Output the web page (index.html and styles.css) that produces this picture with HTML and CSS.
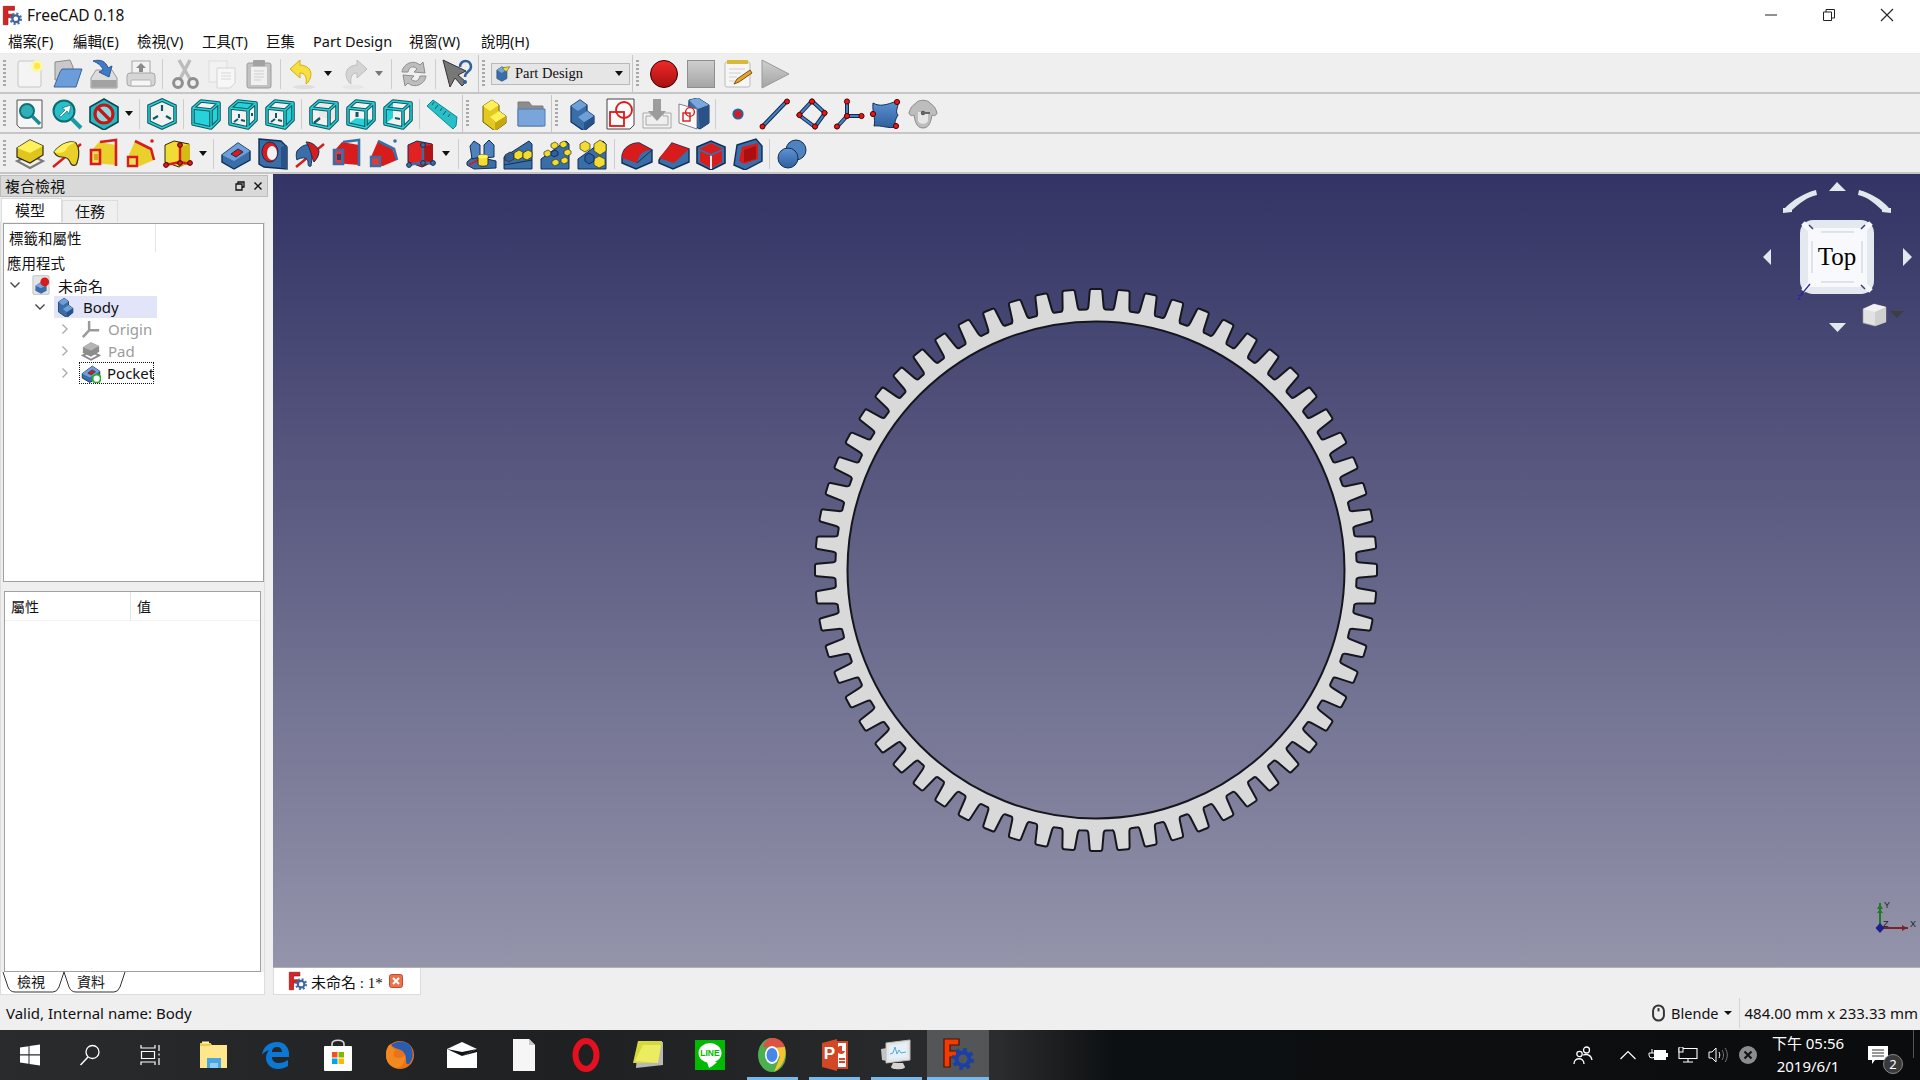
FILE: index.html
```html
<!DOCTYPE html>
<html lang="zh-Hant">
<head>
    <meta charset="UTF-8">
    <title>FreeCAD 0.18</title>
    <link rel="stylesheet" href="styles.css">
</head>
<body>
    <!-- icon sheet -->
    <svg class="defs" xmlns="http://www.w3.org/2000/svg">
        <defs>
            <linearGradient id="gRed" x1="0" y1="0" x2="0" y2="1"><stop offset="0" stop-color="#f02a2a"/><stop offset="1" stop-color="#a80f0f"/></linearGradient>
            <linearGradient id="gGrey" x1="0" y1="0" x2="0" y2="1"><stop offset="0" stop-color="#cfcfcf"/><stop offset="1" stop-color="#a4a4a4"/></linearGradient>
            <linearGradient id="gBlue" x1="0" y1="0" x2="0" y2="1"><stop offset="0" stop-color="#5f93d3"/><stop offset="1" stop-color="#2f5f9f"/></linearGradient>
            <g id="cframe" fill="none" stroke-linejoin="round">
                <path d="M3 10L11 3 29 5V22L21 30 3 26zM3 10L21 12 29 5M21 12V30" stroke="#0d5a62" stroke-width="3.6"/>
                <path d="M3 10L11 3 29 5V22L21 30 3 26zM3 10L21 12 29 5M21 12V30" stroke="#2bd0d8" stroke-width="1.4"/>
            </g>
        </defs>
        <symbol id="logo" viewBox="0 0 32 32"><path d="M2 2h17v6H9v6h8v5H9v11H2z" fill="#d62424" stroke="#7e1414"/><circle cx="21" cy="21" r="7.6" fill="none" stroke="#4a6fa8" stroke-width="4" stroke-dasharray="3 2.95"/><circle cx="21" cy="21" r="5.2" fill="none" stroke="#3f66a3" stroke-width="3.4"/></symbol>

        <symbol id="new" viewBox="0 0 32 32"><rect x="4" y="3" width="23" height="26" rx="2" fill="#f4f4f4" stroke="#c6c6c6"/><circle cx="23" cy="8" r="6" fill="#fdf7a8"/><circle cx="23" cy="8" r="3.2" fill="#fbe94a"/></symbol>
        <symbol id="open" viewBox="0 0 32 32"><path d="M4 22V4l15-2 3 7v13z" fill="#c9c9c9" stroke="#8b8b8b"/><path d="M9 14l2-3h20l-6 18H3z" fill="#6c9ddb" stroke="#3a659e"/></symbol>
        <symbol id="save" viewBox="0 0 32 32"><path d="M3 20l5-8h16l5 8v10H3z" fill="#dcdcdc" stroke="#9a9a9a"/><rect x="3.5" y="22" width="25" height="7.5" fill="#a2a2a2"/><path d="M5 3c7-2 13 0 15 7l4-2-3 11-10-5 4-2c-1-4-5-7-10-9z" fill="#3f7bc8" stroke="#2b568f"/></symbol>
        <symbol id="export" viewBox="0 0 32 32"><rect x="7" y="3" width="18" height="13" fill="#f2f2f2" stroke="#a8a8a8"/><path d="M16 5l5 5h-3v4h-4v-4h-3z" fill="#8a8a8a"/><rect x="2" y="15" width="28" height="13" rx="3" fill="#d6d6d6" stroke="#a6a6a6"/><rect x="6" y="22" width="20" height="6" rx="1" fill="#f6f6f6" stroke="#b4b4b4"/></symbol>
        <symbol id="cut" viewBox="0 0 32 32"><path d="M11 21L21 2M21 21L10 2" stroke="#bcbcbc" stroke-width="3.4" fill="none"/><circle cx="9" cy="25" r="4.4" fill="none" stroke="#8e8e8e" stroke-width="3"/><circle cx="24" cy="25" r="4.4" fill="none" stroke="#8e8e8e" stroke-width="3"/></symbol>
        <symbol id="copy" viewBox="0 0 32 32"><rect x="3" y="3" width="18" height="21" fill="#f2f2f2" stroke="#dedede"/><path d="M11 10h18v15l-5 5H11z" fill="#f7f7f7" stroke="#d4d4d4"/><path d="M15 15h10M15 18h10M15 21h10" stroke="#d8d8d8"/></symbol>
        <symbol id="paste" viewBox="0 0 32 32"><rect x="4" y="5" width="24" height="25" rx="2" fill="#c2c2c2" stroke="#9c9c9c"/><rect x="8" y="9" width="16" height="18" fill="#f0f0f0"/><rect x="10" y="2" width="12" height="6" rx="1" fill="#a2a2a2"/><path d="M11 13h10M11 16h10M11 19h10M11 22h7" stroke="#d0d0d0"/></symbol>
        <symbol id="undo" viewBox="0 0 32 32"><ellipse cx="17" cy="29" rx="11" ry="2" fill="#dedede"/><path d="M13 2L3 11l10 9v-5c5 0 7 4 6 11 6-4 9-18-6-19z" fill="#f6df3e" stroke="#d3ad14"/></symbol>
        <symbol id="redo" viewBox="0 0 32 32"><ellipse cx="15" cy="29" rx="11" ry="2" fill="#e6e6e6"/><path d="M19 2l10 9-10 9v-5c-5 0-7 4-6 11-6-4-9-18 6-19z" fill="#d4d4d4" stroke="#bebebe"/></symbol>
        <symbol id="refresh" viewBox="0 0 32 32"><path d="M4 14C5 6 15 1 22 7l3-3 2 11-11-1 3-3c-4-4-8-2-9 3z" fill="#bdbdbd" stroke="#8c8c8c"/><path d="M28 18c-1 8-11 13-18 7l-3 3-2-11 11 1-3 3c4 4 8 2 9-3z" fill="#bdbdbd" stroke="#8c8c8c"/></symbol>
        <symbol id="whats" viewBox="0 0 32 32"><path d="M1 2l7 27 5-9 7 8 4-4-8-7 8-4z" fill="#777" stroke="#333"/><path d="M18 9c0-8 11-8 11 0 0 5-6 4-6 10" fill="none" stroke="#2e6299" stroke-width="2.600"/><circle cx="23" cy="24" r="2" fill="#2e6299"/></symbol>
        <symbol id="mini-part" viewBox="0 0 32 32"><path d="M5 9l9-6 9 5v16l-9 5-9-5z" fill="#3a6ea8" stroke="#1e3e68"/><path d="M14 14l9-6-9-5-9 6z" fill="#75a3dc"/><path d="M15 5l13-2-6 9-3-2z" fill="#f3dc3c" stroke="#5c4d05"/></symbol>

        <symbol id="fit" viewBox="0 0 32 32"><path d="M3 2h25v28H6l-3-3z" fill="#f6f6f6" stroke="#555"/><circle cx="13" cy="13" r="7" fill="#2fb0b8" stroke="#117078" stroke-width="2"/><path d="M18 18l8 8" stroke="#1a8a92" stroke-width="3.4"/></symbol>
        <symbol id="fitsel" viewBox="0 0 32 32"><circle cx="13" cy="13" r="10.5" fill="#27bfc8" stroke="#0e6a72" stroke-width="2"/><path d="M21 21l9 9" stroke="#1a9aa2" stroke-width="4"/><path d="M8 18l6-6-3-2 9-3-2 9-2-3-6 6z" fill="#fff" stroke="#0e6a72" stroke-width=".7"/></symbol>
        <symbol id="draw" viewBox="0 0 32 32"><path d="M16 1l14 8v15l-14 8-14-8V9z" fill="#27b9c2" stroke="#0e4a50" stroke-width="1.6"/><circle cx="16" cy="16" r="9" fill="#8fd6da" stroke="#c01818" stroke-width="3.2"/><path d="M10 10l12 12" stroke="#c01818" stroke-width="3.2"/></symbol>
        <symbol id="iso" viewBox="0 0 32 32"><g fill="none"><path d="M16 2l13 6v16l-13 6-13-6V8z" fill="#f2f2f2" stroke="#0d5a62" stroke-width="3.600"/><path d="M16 2l13 6v16l-13 6-13-6V8z" stroke="#2bd0d8" stroke-width="1.400"/></g><path d="M16 7v6M7 21l5-3M25 21l-5-3" stroke="#0e5a62" stroke-width="2.200"/></symbol>
        <symbol id="cfront" viewBox="0 0 32 32"><path d="M3 10L11 3 29 5V22L21 30 3 26z" fill="#f2f2f2"/><path d="M3 10L21 12V30L3 26zM21 12L29 5V22L21 30z" fill="#27d3db"/><use href="#cframe"/></symbol>
        <symbol id="ctop" viewBox="0 0 32 32"><path d="M3 10L11 3 29 5V22L21 30 3 26z" fill="#f2f2f2"/><path d="M3 10L11 3 29 5 21 12z" fill="#27d3db"/><use href="#cframe"/><path d="M12 16v4M7 24l4-3M14 22l4 1M25 15v3" stroke="#0e5a62" stroke-width="2"/></symbol>
        <symbol id="cright" viewBox="0 0 32 32"><path d="M3 10L11 3 29 5V22L21 30 3 26z" fill="#f2f2f2"/><path d="M21 12L29 5V22L21 30z" fill="#27d3db"/><use href="#cframe"/><path d="M12 15v5M7 24l4-3M14 22l4 1" stroke="#0e5a62" stroke-width="2"/></symbol>
        <symbol id="crear" viewBox="0 0 32 32"><path d="M3 10L11 3 29 5V22L21 30 3 26z" fill="#f2f2f2"/><path d="M11 5L27 7V21L11 19z" fill="#e8e8e8"/><use href="#cframe"/><path d="M6 25l6-5" stroke="#0e5a62" stroke-width="2.400"/></symbol>
        <symbol id="cbottom" viewBox="0 0 32 32"><path d="M3 10L11 3 29 5V22L21 30 3 26z" fill="#f2f2f2"/><path d="M3 26L21 30 29 22 11 20z" fill="#27d3db"/><use href="#cframe"/><path d="M12 14v5" stroke="#0e5a62" stroke-width="3"/></symbol>
        <symbol id="cleft" viewBox="0 0 32 32"><path d="M3 10L11 3 29 5V22L21 30 3 26z" fill="#f2f2f2"/><path d="M3 10L11 3V20L3 26z" fill="#27d3db"/><use href="#cframe"/><path d="M13 20l5 1" stroke="#0e5a62" stroke-width="2"/></symbol>
        <symbol id="ruler" viewBox="0 0 32 32"><path d="M1 8l6-6 24 17-1 9-3 3z" fill="#27bfc8" stroke="#0e8890"/><path d="M8 4l-2 3M12 7l-3 4M16 10l-2 3M20 13l-3 4M24 16l-2 3" stroke="#0e6068" fill="none"/></symbol>

        <symbol id="step-y" viewBox="0 0 32 32"><path d="M5 13V8l9-6 7 5v6l7 5v7l-11 8L5 24z" fill="#e3c91f" stroke="#6a5a06"/><path d="M5 8l9-6 7 5-9 6zM12 19l9-6 7 5-10 6z" fill="#fff05c"/><path d="M17 25l11-7v7l-11 8z" fill="#c4a90e"/></symbol>
        <symbol id="folder" viewBox="0 0 32 32"><path d="M3 4h11l3 4h11v20H3z" fill="#8d8d8d" stroke="#7a7a7a"/><path d="M3 11h27v17H3z" fill="#7aa5da" stroke="#4e7cb4"/></symbol>
        <symbol id="step-b" viewBox="0 0 32 32"><path d="M4 13V8l9-6 7 5v6l7 5v7l-10 8L4 24z" fill="#3a6ea8" stroke="#102f56" stroke-width="1.2"/><path d="M4 8l9-6 7 5-9 6zM11 19l9-6 7 5-10 6z" fill="#6f9fd8"/><path d="M17 25l10-7v7l-10 8z" fill="#2a5288"/></symbol>
        <symbol id="sketch" viewBox="0 0 32 32"><path d="M3 1h27v26l-4 4H3z" fill="#fafafa" stroke="#444"/><rect x="6" y="14" width="14" height="14" fill="none" stroke="#e01818" stroke-width="1.8"/><circle cx="20" cy="12" r="8" fill="none" stroke="#e01818" stroke-width="1.8"/></symbol>
        <symbol id="inport" viewBox="0 0 32 32"><path d="M2 15h8v3H5v9h22v-9h-5v-3h8v15H2z" fill="#f2f2f2" stroke="#a8a8a8"/><path d="M12 1h8v12h5l-9 10-9-10h5z" fill="#9c9c9c"/></symbol>
        <symbol id="shape" viewBox="0 0 32 32"><path d="M11 2l9-2 11 7v18l-9 6-12-6z" fill="#3a6ea8" stroke="#102f56"/><path d="M11 2l9-2 11 7-11 4z" fill="#7aa7dd"/><path d="M20 11l11-4v18l-9 6z" fill="#2a5288"/><path d="M1 6l18 5v20L1 25z" fill="#fafafa" stroke="#555" stroke-width=".7"/><rect x="5" y="15" width="7" height="8" fill="none" stroke="#e01818" stroke-width="1.4"/><circle cx="12" cy="14" r="4.4" fill="none" stroke="#e01818" stroke-width="1.4"/></symbol>
        <symbol id="point" viewBox="0 0 32 32"><circle cx="16" cy="16" r="4.6" fill="#d81c1c" stroke="#2f5f9f" stroke-width="2"/></symbol>
        <symbol id="line" viewBox="0 0 32 32"><path d="M3 29L28 3" stroke="#0e2a4e" stroke-width="4"/><path d="M3 29L28 3" stroke="#4a80c2" stroke-width="2"/><circle cx="3.5" cy="28.5" r="2.5" fill="#e01818" stroke="#500"/><circle cx="28" cy="3.5" r="2.5" fill="#e01818" stroke="#500"/></symbol>
        <symbol id="plane" viewBox="0 0 32 32"><path d="M16 3l13 12-10 14L3 17z" fill="none" stroke="#0e2a4e" stroke-width="4"/><path d="M16 3l13 12-10 14L3 17z" fill="none" stroke="#4a80c2" stroke-width="2"/><circle cx="16" cy="3.5" r="2.6" fill="#e01818" stroke="#500"/><circle cx="28.5" cy="15" r="2.6" fill="#e01818" stroke="#500"/><circle cx="19" cy="28.5" r="2.6" fill="#e01818" stroke="#500"/><circle cx="3.5" cy="17" r="2.6" fill="#e01818" stroke="#500"/></symbol>
        <symbol id="lcs" viewBox="0 0 32 32"><path d="M14 3v15L4 29M14 18h15" fill="none" stroke="#0e2a4e" stroke-width="4"/><path d="M14 3v15L4 29M14 18h15" fill="none" stroke="#4a80c2" stroke-width="2"/><circle cx="14" cy="3.5" r="2.6" fill="#e01818" stroke="#500"/><circle cx="14" cy="18" r="2.6" fill="#e01818" stroke="#500"/><circle cx="28.5" cy="18" r="2.6" fill="#e01818" stroke="#500"/><circle cx="4" cy="28.5" r="2.6" fill="#e01818" stroke="#500"/></symbol>
        <symbol id="binder" viewBox="0 0 32 32"><path d="M3 5c7 4 13 2 24-2 3 5-3 10 1 14-3 5-4 9-2 12-8 2-14-2-22-1 2-8-2-13-1-23z" fill="url(#gBlue)" stroke="#102f56"/><circle cx="27" cy="4" r="2.6" fill="#e01818" stroke="#500"/><circle cx="26" cy="28" r="2.6" fill="#e01818" stroke="#500"/><circle cx="3" cy="16" r="2.6" fill="#e01818" stroke="#500"/></symbol>
        <symbol id="sheep" viewBox="0 0 32 32"><path d="M8 6c3-5 13-5 16 0 3 2 4 3 6 9-1 3-3 3-5 2-1 5-2 13-9 13s-8-8-9-13c-2 1-4 1-5-2 2-6 3-7 6-9z" fill="#bdbdbd" stroke="#8a8a8a"/><path d="M11 14h10v8c0 5-10 5-10 0z" fill="#e6e6e6"/><circle cx="16" cy="15" r="2.2" fill="#555"/><rect x="15" y="14" width="8" height="2" fill="#666"/></symbol>

        <symbol id="pad" viewBox="0 0 32 32"><path d="M16 17l13 6-13 7-13-7z" fill="none" stroke="#7a7a7a" stroke-width="2"/><path d="M3 10l13-8 13 6v9l-13 8-13-6z" fill="#e0c51c" stroke="#2e2a08" stroke-width="1.2"/><path d="M3 10l13-8 13 6-13 7z" fill="#fff15a"/></symbol>
        <symbol id="rev" viewBox="0 0 32 32"><path d="M2 29L30 6" stroke="#d81c1c" stroke-width="2.4"/><path d="M3 14C10 5 20 2 25 5c3 4 4 12 1 20-1 3-4 3-6 1-2-5-4-7-9-7-3 0-6-1-8-5z" fill="#e8cf2a" stroke="#3a3308" stroke-width="1.2"/><path d="M3 14C10 5 20 2 25 5c-3 0-8 2-10 7-3 3-7 4-12 2z" fill="#fff15a"/></symbol>
        <symbol id="aloft" viewBox="0 0 32 32"><path d="M11 4l17 3v20l-24-2V12z" fill="#ead02c"/><path d="M3 12h9v14H3z" fill="#f1dc5e" stroke="#d81c1c" stroke-width="2.6"/><path d="M12 4l16-2v26" fill="none" stroke="#d81c1c" stroke-width="2.6"/><rect x="6" y="16" width="4" height="6" fill="#d6a820"/></symbol>
        <symbol id="apipe" viewBox="0 0 32 32"><path d="M10 3L24 10l5 12-14 6H3v-9z" fill="#ead02c"/><path d="M10 3l16 8 3 11" fill="none" stroke="#d81c1c" stroke-width="2.6"/><path d="M3 19h9v9H3z" fill="#f1dc5e" stroke="#d81c1c" stroke-width="2.4"/><circle cx="27" cy="3" r="1.8" fill="#d81c1c"/></symbol>
        <symbol id="aprim" viewBox="0 0 32 32"><path d="M3 7l9-4 15 3v18l-10 5-14-5z" fill="#f0dc32" stroke="#2e2a08"/><path d="M18 9v20l10-5V6z" fill="#d6ba16"/><path d="M18 7v17M4 27l14-3 10 2" fill="none" stroke="#d81c1c" stroke-width="2.4"/><circle cx="18" cy="7" r="2.4" fill="#d81c1c" stroke="#500"/><circle cx="18" cy="25" r="2.4" fill="#d81c1c" stroke="#500"/><circle cx="4" cy="27" r="2.4" fill="#d81c1c" stroke="#500"/><circle cx="28" cy="25" r="2.4" fill="#d81c1c" stroke="#500"/></symbol>
        <symbol id="pocket" viewBox="0 0 32 32"><path d="M2 17L18 5l12 8v9L14 31 2 24z" fill="#3a6ea8" stroke="#102f56" stroke-width="1.4"/><path d="M2 17L18 5l12 8-16 10z" fill="#6f9fd8"/><path d="M11 16l7-5 5 3-7 5z" fill="#d81c1c" stroke="#102f56"/></symbol>
        <symbol id="hole" viewBox="0 0 32 32"><path d="M2 1l22 2 6 6v22l-23-2-5-3z" fill="#3a6ea8" stroke="#102f56" stroke-width="1.4"/><path d="M24 9l6-2v24l-6-2z" fill="#2a5288"/><ellipse cx="13" cy="14" rx="8" ry="10" fill="#d81c1c" stroke="#102f56"/><ellipse cx="15" cy="15" rx="5" ry="7" fill="#eef2f6"/></symbol>
        <symbol id="groove" viewBox="0 0 32 32"><path d="M2 29L30 6" stroke="#d81c1c" stroke-width="2.4"/><path d="M3 13C8 7 13 6 17 7c2 7 1 14 0 21-3 1-3-1-3-5-1-4-7-4-11-1-1-3-1-6 0-9z" fill="#3a6ea8" stroke="#102f56"/><path d="M12 4c6 0 11 4 13 9 0 4-2 8-5 11-3-6-3-13-8-20z" fill="#d81c1c" stroke="#102f56"/></symbol>
        <symbol id="sloft" viewBox="0 0 32 32"><path d="M11 4l17 3v20l-24-2V12z" fill="#d81c1c"/><path d="M3 12h9v14H3z" fill="#e23a3a" stroke="#3a6ea8" stroke-width="2.6"/><path d="M12 4l16-2v26" fill="none" stroke="#3a6ea8" stroke-width="2.6"/><rect x="6" y="16" width="4" height="6" fill="#333f68"/></symbol>
        <symbol id="spipe" viewBox="0 0 32 32"><path d="M10 3L24 10l5 12-14 6H3v-9z" fill="#d81c1c"/><path d="M10 3l16 8 3 11" fill="none" stroke="#3a6ea8" stroke-width="2.6"/><path d="M3 19h9v9H3z" fill="#e23a3a" stroke="#3a6ea8" stroke-width="2.4"/><circle cx="27" cy="3" r="1.8" fill="#3a6ea8"/></symbol>
        <symbol id="sprim" viewBox="0 0 32 32"><path d="M3 7l9-4 15 3v18l-10 5-14-5z" fill="#e22222" stroke="#102f56"/><path d="M18 9v20l10-5V6z" fill="#b01414"/><path d="M18 7v17M4 27l14-3 10 2" fill="none" stroke="#3a6ea8" stroke-width="2.4"/><circle cx="18" cy="7" r="2.4" fill="#3a6ea8" stroke="#102f56"/><circle cx="18" cy="25" r="2.4" fill="#3a6ea8" stroke="#102f56"/><circle cx="4" cy="27" r="2.4" fill="#3a6ea8" stroke="#102f56"/><circle cx="28" cy="25" r="2.4" fill="#3a6ea8" stroke="#102f56"/></symbol>
        <symbol id="mirror" viewBox="0 0 32 32"><path d="M1 24l7-6 22 5v7l-22 1-7-4z" fill="#3a6ea8" stroke="#102f56"/><path d="M4 8l4-5 6 4v12l-8 2zM18 7l5-5 5 5v12l-10 1z" fill="#4f82bf" stroke="#102f56"/><path d="M3 27L15 20" stroke="#d81c1c" stroke-width="2"/><path d="M12 19c0-3 10-3 10 0v7c0 3-10 3-10 0z" fill="#f0dc32" stroke="#3a3308"/><ellipse cx="17" cy="18.5" rx="5" ry="2" fill="#fff15a"/></symbol>
        <symbol id="linear" viewBox="0 0 32 32"><path d="M1 19L26 3l3 3v25H1z" fill="#3a6ea8" stroke="#102f56"/><path d="M1 27L29 22" stroke="#102f56" stroke-width="1"/><g stroke="#3a3308" stroke-width=".8"><path d="M2 17l5-3 4 2v5l-5 3-4-2z" fill="#2f5f9f"/><path d="M11 15l5-3 4 2v5l-5 3-4-2z" fill="#f0dc32"/><path d="M20 15l5-3 4 2v5l-5 3-4-2z" fill="#f0dc32"/></g></symbol>
        <symbol id="polar" viewBox="0 0 32 32"><path d="M1 21L26 3l3 3v25H1z" fill="#3a6ea8" stroke="#102f56"/><g stroke="#3a3308" stroke-width=".7" fill="#f0dc32"><path d="M4 14l4-2 3 2v3l-4 2-3-2zM11 6l4-2 3 2v3l-4 2-3-2zM20 5l4-2 3 2v3l-4 2-3-2zM24 13l4-2 3 2v3l-4 2-3-2zM21 21l4-2 3 2v3l-4 2-3-2zM12 23l4-2 3 2v3l-4 2-3-2z"/></g><path d="M11 14l4-2 3 2v3l-4 2-3-2z" fill="#2f5f9f" stroke="#102f56"/></symbol>
        <symbol id="multi" viewBox="0 0 32 32"><path d="M1 21L26 3l3 3v25H1z" fill="#3a6ea8" stroke="#102f56"/><g stroke="#3a3308" stroke-width=".7" fill="#f0dc32"><path d="M3 6l5-3 5 3v5l-5 3-5-3zM17 6l6-4 6 4v7l-6 4-6-4zM17 21l5-3 6 3v6l-6 3-5-3z"/></g><path d="M8 18l4-3 5 3v5l-5 3-4-3z" fill="#2f5f9f" stroke="#102f56"/></symbol>
        <symbol id="fillet" viewBox="0 0 32 32"><path d="M1 20c0-10 9-15 17-15l13 7v12L15 31 1 25z" fill="#3a6ea8" stroke="#102f56" stroke-width="1.4"/><path d="M1 20c0-10 9-15 17-15l13 7c-9 0-13 4-15 13z" fill="#d81c1c"/><path d="M16 25l15-13" stroke="#102f56"/></symbol>
        <symbol id="chamfer" viewBox="0 0 32 32"><path d="M1 22l13-17 17 6v13L15 31 1 25z" fill="#3a6ea8" stroke="#102f56" stroke-width="1.4"/><path d="M1 20L14 5l17 6-15 14z" fill="#d81c1c"/></symbol>
        <symbol id="draft" viewBox="0 0 32 32"><path d="M2 9l14-6 14 6v16l-14 7-14-7z" fill="#3a6ea8" stroke="#102f56" stroke-width="1.6"/><path d="M4 11l12-6 12 6-12 5z" fill="#d81c1c"/><path d="M5 12l11 5v13L5 24zM27 12l-11 5v13l11-6z" fill="#d81c1c"/><path d="M16 16v15" stroke="#dfe6ee" stroke-width="2"/><path d="M5 12l11 5 11-5" fill="none" stroke="#3a6ea8" stroke-width="1.600"/></symbol>
        <symbol id="thick" viewBox="0 0 32 32"><path d="M5 7L24 1l6 7v15L13 32 2 27z" fill="#3a6ea8" stroke="#102f56" stroke-width="1.4"/><path d="M10 9l16-4v16l-14 5-5-3z" fill="#d81c1c"/><path d="M12 12l12-4v13l-12 3z" fill="#a80f0f"/></symbol>
        <symbol id="bool" viewBox="0 0 32 32"><circle cx="20" cy="12" r="10" fill="#4f82bf" stroke="#102f56"/><circle cx="12" cy="20" r="10" fill="url(#gBlue)" stroke="#102f56"/></symbol>

        <symbol id="origin" viewBox="0 0 32 32"><path d="M13 3v15L3 29M13 18h16" fill="none" stroke="#9a9a9a" stroke-width="4"/></symbol>
        <symbol id="padg" viewBox="0 0 32 32"><path d="M16 17l13 6-13 7-13-7z" fill="none" stroke="#8a8a8a" stroke-width="3"/><path d="M3 10l13-8 13 6v9l-13 8-13-6z" fill="#8c8c8c"/><path d="M3 10l13-8 13 6-13 7z" fill="#b4b4b4"/></symbol>
        <symbol id="doc" viewBox="0 0 32 32"><rect x="3" y="1" width="26" height="30" rx="2" fill="#e4e4e4" stroke="#aaa"/><path d="M7 17l9-6 9 5v9l-9 5-9-5z" fill="#3a6ea8"/><path d="M7 17l9-6 9 5-9 5z" fill="#7aa7dd"/><circle cx="22" cy="11" r="7" fill="#d81c1c"/></symbol>
    </svg>

    <header class="titlebar">
        <svg class="logo"><use href="#logo"/></svg>
        <span class="title">FreeCAD 0.18</span>
        <div class="winctl">
            <span class="wbtn"><svg width="12" height="12" viewBox="0 0 12 12"><path d="M0 6h12" stroke="#222"/></svg></span>
            <span class="wbtn"><svg width="12" height="12" viewBox="0 0 12 12"><path d="M.5 3h8v8.500h-8zM3 3V.5h8.500V9H9" fill="none" stroke="#222"/></svg></span>
            <span class="wbtn"><svg width="14" height="14" viewBox="0 0 14 14"><path d="M1 1l12 12M13 1L1 13" stroke="#222" stroke-width="1.100"/></svg></span>
        </div>
    </header>

    <nav class="menubar">
        <span class="m1">檔案(F)</span>
        <span class="m2">編輯(E)</span>
        <span class="m3">檢視(V)</span>
        <span class="m4">工具(T)</span>
        <span class="m5">巨集</span>
        <span class="m6">Part Design</span>
        <span class="m7">視窗(W)</span>
        <span class="m8">說明(H)</span>
    </nav>

    <div class="toolbar">
        <i class="grip"></i>
        <span class="btn"><svg><use href="#new"/></svg></span>
        <span class="btn"><svg><use href="#open"/></svg></span>
        <span class="btn"><svg><use href="#save"/></svg></span>
        <span class="btn"><svg><use href="#export"/></svg></span>
        <i class="sep"></i>
        <span class="btn"><svg><use href="#cut"/></svg></span>
        <span class="btn"><svg><use href="#copy"/></svg></span>
        <span class="btn"><svg><use href="#paste"/></svg></span>
        <i class="sep"></i>
        <span class="btn"><svg><use href="#undo"/></svg></span>
        <span class="dd"></span>
        <span class="btn"><svg><use href="#redo"/></svg></span>
        <span class="dd off"></span>
        <i class="sep sep-wide"></i>
        <span class="btn"><svg><use href="#refresh"/></svg></span>
        <i class="sep"></i>
        <span class="btn"><svg><use href="#whats"/></svg></span>
        <i class="end end2"></i>
        <i class="grip"></i>
        <div class="combo">
            <svg class="combo-icon"><use href="#mini-part"/></svg>
            <span>Part Design</span>
            <span class="combo-caret"></span>
        </div>
        <i class="end end2"></i>
        <i class="grip"></i>
        <span class="btn">
            <svg viewBox="0 0 32 32"><circle cx="16" cy="16" r="13.500" fill="url(#gRed)" stroke="#300" stroke-width="1"/></svg>
        </span>
        <span class="btn">
            <svg viewBox="0 0 32 32"><rect x="2.500" y="2.500" width="27" height="27" fill="url(#gGrey)" stroke="#8e8e8e"/></svg>
        </span>
        <span class="btn">
            <svg viewBox="0 0 32 32"><rect x="3" y="4" width="25" height="25" rx="2" fill="#f6f6f6" stroke="#bbb"/><rect x="5" y="2" width="21" height="4" fill="#d8b93a"/><path d="M7 11h16M7 15h12M7 19h8M7 23h6" stroke="#cfcfcf"/><path d="M12 26l3-5 13-9 2 3-13 9z" fill="#e8a32c" stroke="#7a5310"/></svg>
        </span>
        <span class="btn">
            <svg viewBox="0 0 32 32"><path d="M3 2l27 14L3 30z" fill="url(#gGrey)" stroke="#999"/></svg>
        </span>
    </div>

    <div class="toolbar">
        <i class="grip"></i>
        <span class="btn"><svg><use href="#fit"/></svg></span>
        <span class="btn"><svg><use href="#fitsel"/></svg></span>
        <span class="btn"><svg><use href="#draw"/></svg></span>
        <span class="dd"></span>
        <i class="sep"></i>
        <span class="btn"><svg><use href="#iso"/></svg></span>
        <i class="sep"></i>
        <span class="btn"><svg><use href="#cfront"/></svg></span>
        <span class="btn"><svg><use href="#ctop"/></svg></span>
        <span class="btn"><svg><use href="#cright"/></svg></span>
        <i class="sep"></i>
        <span class="btn"><svg><use href="#crear"/></svg></span>
        <span class="btn"><svg><use href="#cbottom"/></svg></span>
        <span class="btn"><svg><use href="#cleft"/></svg></span>
        <i class="sep"></i>
        <span class="btn"><svg><use href="#ruler"/></svg></span>
        <i class="end end2"></i>
        <i class="grip"></i>
        <span class="btn"><svg><use href="#step-y"/></svg></span>
        <span class="btn"><svg><use href="#folder"/></svg></span>
        <i class="end end2"></i>
        <i class="grip"></i>
        <span class="btn"><svg><use href="#step-b"/></svg></span>
        <span class="btn"><svg><use href="#sketch"/></svg></span>
        <span class="btn"><svg><use href="#inport"/></svg></span>
        <span class="btn"><svg><use href="#shape"/></svg></span>
        <i class="sep"></i>
        <span class="btn"><svg><use href="#point"/></svg></span>
        <span class="btn"><svg><use href="#line"/></svg></span>
        <span class="btn"><svg><use href="#plane"/></svg></span>
        <span class="btn"><svg><use href="#lcs"/></svg></span>
        <span class="btn"><svg><use href="#binder"/></svg></span>
        <span class="btn"><svg><use href="#sheep"/></svg></span>
    </div>

    <div class="toolbar">
        <i class="grip"></i>
        <span class="btn"><svg><use href="#pad"/></svg></span>
        <span class="btn"><svg><use href="#rev"/></svg></span>
        <span class="btn"><svg><use href="#aloft"/></svg></span>
        <span class="btn"><svg><use href="#apipe"/></svg></span>
        <span class="btn"><svg><use href="#aprim"/></svg></span>
        <span class="dd"></span>
        <i class="sep"></i>
        <span class="btn"><svg><use href="#pocket"/></svg></span>
        <span class="btn"><svg><use href="#hole"/></svg></span>
        <span class="btn"><svg><use href="#groove"/></svg></span>
        <span class="btn"><svg><use href="#sloft"/></svg></span>
        <span class="btn"><svg><use href="#spipe"/></svg></span>
        <span class="btn"><svg><use href="#sprim"/></svg></span>
        <span class="dd"></span>
        <i class="sep sep-pattern"></i>
        <span class="btn"><svg><use href="#mirror"/></svg></span>
        <span class="btn"><svg><use href="#linear"/></svg></span>
        <span class="btn"><svg><use href="#polar"/></svg></span>
        <span class="btn"><svg><use href="#multi"/></svg></span>
        <i class="sep"></i>
        <span class="btn"><svg><use href="#fillet"/></svg></span>
        <span class="btn"><svg><use href="#chamfer"/></svg></span>
        <span class="btn"><svg><use href="#draft"/></svg></span>
        <span class="btn"><svg><use href="#thick"/></svg></span>
        <i class="sep"></i>
        <span class="btn"><svg><use href="#bool"/></svg></span>
    </div>

    <div class="main">
        <aside class="dock">
            <div class="dock-head">
                <span>複合檢視</span>
                <svg class="dock-float" viewBox="0 0 10 10"><path d="M3 3V1h6v5H7M1 3h6v6H1z" fill="none" stroke="#111" stroke-width="1.300"/></svg>
                <svg class="dock-close" viewBox="0 0 10 10"><path d="M1.500 1.500l7 7M8.500 1.500l-7 7" stroke="#111" stroke-width="1.400"/></svg>
            </div>
            <div class="dock-tabs">
                <span class="dtab on">模型</span>
                <span class="dtab">任務</span>
            </div>
            <div class="dock-page">
                <div class="tree">
                    <div class="tree-head"><span>標籤和屬性</span></div>
                    <div class="row group-label">應用程式</div>
                    <div class="row d1">
                        <svg class="chev" viewBox="0 0 12 12"><path d="M1.500 3.500L6 8l4.500-4.500" fill="none" stroke="#444" stroke-width="1.400"/></svg>
                        <span class="node"><svg class="ico"><use href="#doc"/></svg>未命名</span>
                    </div>
                    <div class="row d2">
                        <svg class="chev" viewBox="0 0 12 12"><path d="M1.500 3.500L6 8l4.500-4.500" fill="none" stroke="#444" stroke-width="1.400"/></svg>
                        <span class="node sel"><svg class="ico"><use href="#step-b"/></svg>Body</span>
                    </div>
                    <div class="row d3 dim">
                        <svg class="chev" viewBox="0 0 12 12"><path d="M3.500 1.500L8 6l-4.500 4.500" fill="none" stroke="#aaa" stroke-width="1.400"/></svg>
                        <span class="node"><svg class="ico"><use href="#origin"/></svg>Origin</span>
                    </div>
                    <div class="row d3 dim">
                        <svg class="chev" viewBox="0 0 12 12"><path d="M3.500 1.500L8 6l-4.500 4.500" fill="none" stroke="#aaa" stroke-width="1.400"/></svg>
                        <span class="node"><svg class="ico"><use href="#padg"/></svg>Pad</span>
                    </div>
                    <div class="row d3">
                        <svg class="chev" viewBox="0 0 12 12"><path d="M3.500 1.500L8 6l-4.500 4.500" fill="none" stroke="#aaa" stroke-width="1.400"/></svg>
                        <span class="node focus">
                            <svg class="ico" viewBox="0 0 32 32">
                                <use href="#pocket" width="32" height="32"/>
                                <circle cx="25" cy="25" r="6.500" fill="#fff" stroke="#1fb41f" stroke-width="3"/>
                            </svg>Pocket</span>
                    </div>
                </div>
                <div class="props">
                    <div class="props-head"><span class="ph1">屬性</span><span class="ph2">值</span></div>
                </div>
                <div class="page-tabs">
                    <svg class="tab-shape" width="126" height="22" viewBox="0 0 126 22">
                        <path d="M2 0l5 15q2 5 7 5h38q4 0 6-5l5-15M63 0l5 15q2 5 7 5h38q4 0 6-5l5-15" fill="none" stroke="#333"/>
                    </svg>
                    <span class="ptab pt1">檢視</span>
                    <span class="ptab pt2">資料</span>
                </div>
            </div>
        </aside>

        <section class="center">
            <div class="viewport">
                <svg class="gear" width="600" height="600" viewBox="0 0 600 600">
                    <path id="gearPath" fill="#d9d9d9" fill-rule="evenodd" stroke="#16161e" stroke-width="2" stroke-linejoin="round"/>
                </svg>

                <svg class="navcube" width="200" height="176" viewBox="0 14 200 176">
                    <g fill="#e3e8ee">
                        <path d="M117 22l9 9h-17zM109 163h17l-8.500 9zM51 89v16l-8-8zM183 88v18l9-9z"/>
                        <path d="M96 30c-12 3-23 10-31 18l-2 0 0 5 9-1 0-2c8-7 15-13 25-15z"/>
                        <path d="M139 30c12 3 23 10 30 18l2 0 0 5-9-1 0-2c-8-7-14-13-24-15z"/>
                    </g>
                    <rect x="80" y="60" width="74" height="74" rx="13" fill="#e3e9ef"/>
                    <path d="M88 68h59v59H88z" fill="#f8f9fc"/>
                    <path d="M83 63l9 9M151 63l-9 9M83 131l9-9M151 131l-9-9" stroke="#f6f8fb" stroke-width="5"/>
                    <path d="M89 65l4 4M145 65l-4 4M145 129l-4-4" stroke="#3a3c70" stroke-width="1.500"/>
                    <path d="M101 72h33M101 122h33M92 81v32M142 81v32" stroke="#c9cbd8" stroke-width="1"/>
                    <text x="117" y="105" class="cube-label" text-anchor="middle">Top</text>
                    <path d="M90 124l-9 11" stroke="#2222aa" stroke-width="1.200"/>
                    <text x="77" y="140" class="cube-z">z</text>
                    <path d="M143 149l11-5 12 3v15l-11 4-12-3z" fill="#e2e2e2" stroke="#999" stroke-width=".6"/>
                    <path d="M143 149l11-5 12 3-11 5z" fill="#f2f2f2"/>
                    <path d="M155 152l11-5v15l-11 4z" fill="#cfcfcf"/>
                    <path d="M170 151h14l-7 7z" fill="#3d3d42"/>
                </svg>

                <svg class="axes" width="60" height="46" viewBox="0 0 60 46">
                    <path d="M20 30V4" stroke="#1e7a26" stroke-width="2"/>
                    <path d="M20 5l3 5h-6zM17 14h6l-3-4z" fill="#1e7a26"/>
                    <path d="M20 29h28" stroke="#7e2225" stroke-width="2"/>
                    <path d="M42 26l5 3-5 3z" fill="#7e2225"/>
                    <path d="M20 24l4.500 5-4.500 5-4.500-5z" fill="#1f1f8e"/>
                    <text x="24" y="3" dy="6" class="axis">Y</text>
                    <text x="23" y="28" class="axis">Z</text>
                    <text x="50" y="28" class="axis">X</text>
                </svg>
            </div>
            <div class="mdi-bar">
                <div class="mdi-tab">
                    <svg class="mdi-logo"><use href="#logo"/></svg>
                    <span>未命名 : 1*</span>
                    <svg class="mdi-close" viewBox="0 0 14 14"><rect x=".5" y=".5" width="13" height="13" rx="2" fill="#e8744e" stroke="#c9492a"/><path d="M4 4l6 6M10 4l-6 6" stroke="#fff" stroke-width="2"/></svg>
                </div>
            </div>
        </section>
    </div>

    <footer class="statusbar">
        <span class="status-msg">Valid, Internal name: Body</span>
        <svg class="status-mouse" viewBox="0 0 12 16"><rect x="1" y="1" width="10" height="14" rx="5" fill="none" stroke="#333" stroke-width="1.800"/><path d="M6 3.500v3" stroke="#333" stroke-width="1.800"/></svg>
        <span class="status-nav">Blende</span>
        <span class="status-caret"></span>
        <i class="status-sep"></i>
        <span class="status-dim">484.00 mm x 233.33 mm</span>
    </footer>

    <div class="taskbar">
        <span class="sys"><svg width="24" height="24" viewBox="0 0 24 24"><path d="M2 4.500l8.500-1.200v8H2zM11.500 3.100L22 1.600v9.700H11.500zM2 12.500h8.500v8.200L2 19.500zM11.500 12.500H22v10l-10.500-1.500z" fill="#fff"/></svg></span>
        <span class="sys"><svg width="24" height="24" viewBox="0 0 24 24"><circle cx="14.500" cy="9" r="6.500" fill="none" stroke="#fff" stroke-width="1.300"/><path d="M10 14l-7.500 8" stroke="#fff" stroke-width="1.500"/></svg></span>
        <span class="sys"><svg width="24" height="24" viewBox="0 0 24 24"><path d="M3 2v3h14V2M3 22v-3h14v3M3.500 8.500h13v7h-13zM21 2v6M21 10.500v2M21 15v7" fill="none" stroke="#fff" stroke-width="1.200"/></svg></span>
        <span class="app sysgap"><svg width="30" height="30" viewBox="0 0 30 30"><path d="M1 3h10l2 2h15v23H1z" fill="#fde68c"/><path d="M1 3h11v3H1z" fill="#f2c94c"/><path d="M3 1.500h7v2H3z" fill="#fff4bd"/><path d="M8 18h14v10h-3v-5h-8v5H8z" fill="#4aa6e0"/><path d="M11 23h8v5h-8z" fill="#8ed0f5"/></svg></span>
        <span class="app"><svg width="30" height="30" viewBox="0 0 30 30"><path d="M1 15C2 7 8 2 16 2c8 0 13 6 12 15H11c0 4 3 6 7 6 3 0 6-1 9-3v6c-3 2-7 3-10 3C10 29 5 24 5 18c0-3 1-5 3-8-3 1-6 3-7 5zm10-3h10c0-3-2-5-5-5s-5 2-5 5z" fill="#0c78d6"/></svg></span>
        <span class="app"><svg width="30" height="32" viewBox="0 0 30 32"><path d="M9 8V5c0-5 12-5 12 0v3" fill="none" stroke="#d8d8d8" stroke-width="1.600"/><rect x="1" y="7" width="28" height="25" rx="1" fill="#fff"/><rect x="9" y="13" width="5.500" height="5.500" fill="#f25022"/><rect x="15.500" y="13" width="5.500" height="5.500" fill="#7fba00"/><rect x="9" y="19.500" width="5.500" height="5.500" fill="#00a4ef"/><rect x="15.500" y="19.500" width="5.500" height="5.500" fill="#ffb900"/></svg></span>
        <span class="app"><svg width="30" height="30" viewBox="0 0 30 30"><circle cx="15" cy="15" r="14" fill="#e8731a"/><path d="M6 5c6-5 16-5 20 2 3 6 2 13-2 17-3 1-3-2-3-5 0-5-3-9-8-10-3-1-5-2-7-4z" fill="#2a5db0"/><path d="M1 15C1 9 3 5 6 4c0 3 2 5 5 6-3 2-3 5-1 7 3 2 8 1 10-2 1 5-2 12-8 13-7-1-11-6-11-13z" fill="#f08a1e"/></svg></span>
        <span class="app"><svg width="30" height="26" viewBox="0 0 30 26"><path d="M0 7L15 0l15 7v19H0z" fill="#fff"/><path d="M0 7l15 7 15-7-15 3z" fill="#111"/><path d="M15 14l15-7v3z" fill="#111"/></svg></span>
        <span class="app"><svg width="22" height="32" viewBox="0 0 22 32"><path d="M0 0h16l6 6v26H0z" fill="#f6f6f6"/><path d="M16 0l6 6h-6z" fill="#c8c8c8"/></svg></span>
        <span class="app"><svg width="30" height="34" viewBox="0 0 30 34"><ellipse cx="15" cy="17" rx="10.500" ry="14" fill="none" stroke="#e3111f" stroke-width="6"/></svg></span>
        <span class="app"><svg width="30" height="28" viewBox="0 0 30 28"><path d="M5 1h25v23l-27 3z" fill="#b8b8b8"/><path d="M5 0h24l-4 22H0z" fill="#d8d83c"/><path d="M2 20l8-16h18l-3 18z" fill="#ecec62"/></svg></span>
        <span class="app"><svg width="30" height="30" viewBox="0 0 30 30"><rect width="30" height="36" y="-3" rx="4" fill="#00b900"/><ellipse cx="15" cy="13" rx="11.500" ry="10" fill="#fff"/><path d="M12 22l2 6c4-2 6-4 8-6z" fill="#fff"/><text x="15" y="16" class="line-text" text-anchor="middle">LINE</text></svg></span>
        <span class="app"><svg width="30" height="34" viewBox="0 0 30 34"><ellipse cx="15" cy="17" rx="14" ry="17" fill="#4caf50"/><path d="M15 0c6 0 11 3 13 9l-13 1L6 9c1-5 5-9 9-9z" fill="#de5246"/><path d="M28 9c2 8-1 19-11 25l6-15-8-9z" fill="#f6c333"/><ellipse cx="15" cy="17" rx="7" ry="9" fill="#fff"/><ellipse cx="15" cy="17" rx="5.500" ry="7" fill="#4a86e8"/></svg></span>
        <span class="app"><svg width="28" height="34" viewBox="0 0 28 34"><path d="M2 5l15-4v32L2 29z" fill="#d24726"/><path d="M17 4h10v26H17z" fill="#fff" stroke="#d24726" stroke-width="2"/><path d="M19 21h6M19 24h6" stroke="#d24726" stroke-width="2"/><path d="M22 8a4 4 0 1 0 3 5h-3z" fill="#d24726"/><text x="9.500" y="21" class="ppt-text" text-anchor="middle">P</text></svg></span>
        <span class="app"><svg width="30" height="32" viewBox="0 0 30 32"><path d="M0 10l6-1v13l-5-1z" fill="#c4c4c4"/><path d="M5 4l24-3v20L5 24z" fill="#e6e6e6" stroke="#bbb"/><path d="M8 7l18-3v14L8 20z" fill="#e4f1fb"/><path d="M9 15l3-1 2-6 2 7 2-4 2 3 5-1" fill="none" stroke="#58a6dc"/><path d="M12 24h10l2 4c0 3-14 3-14 0z" fill="#d4d4d4"/></svg></span>
        <span class="app active"><svg width="32" height="34" viewBox="0 0 32 34"><path d="M2 1h15v6H8v6h7v6H8v10H2z" fill="#f43a00" stroke="#4a1200" stroke-width="1.200"/><circle cx="21" cy="21" r="9" fill="none" stroke="#1a3fa8" stroke-width="4.400" stroke-dasharray="3.400 3.660"/><circle cx="21" cy="21" r="6.500" fill="none" stroke="#1a3fa8" stroke-width="4"/></svg></span>
        <span class="under u1"></span><span class="under u2"></span><span class="under u3"></span><span class="under u4"></span>

        <div class="tray">
            <span class="t-item t-people"><svg width="20" height="20" viewBox="0 0 20 20"><circle cx="13.500" cy="5" r="3" fill="none" stroke="#fff" stroke-width="1.300"/><circle cx="6.500" cy="9" r="2.700" fill="none" stroke="#fff" stroke-width="1.300"/><path d="M1 19c0-7 10-7 10 0M10 10c3-1 8-1 9 5" fill="none" stroke="#fff" stroke-width="1.300"/></svg></span>
            <span class="t-item"><svg width="16" height="10" viewBox="0 0 16 10"><path d="M.5 9L8 1.500 15.500 9" fill="none" stroke="#fff" stroke-width="1.200"/></svg></span>
            <span class="t-item"><svg width="20" height="14" viewBox="0 0 20 14"><path d="M4 1v4M1 5h6v2a3 3 0 0 1-6 0z" stroke="#fff" fill="none"/><rect x="6" y="2" width="12" height="10" fill="#fff"/><rect x="18" y="5" width="2" height="4" fill="#fff"/></svg></span>
            <span class="t-item"><svg width="20" height="16" viewBox="0 0 20 16"><path d="M1 1.500h18v10H1zM10 11.500v3M5 15h10" fill="none" stroke="#fff" stroke-width="1.100"/><rect x="1" y="0" width="4" height="5" fill="#111" stroke="#fff"/></svg></span>
            <span class="t-item"><svg width="20" height="16" viewBox="0 0 20 16"><path d="M1 5h3l4-4v14l-4-4H1z" fill="none" stroke="#fff"/><path d="M11 5c1 2 1 4 0 6" fill="none" stroke="#fff"/><path d="M14 3c2 3 2 7 0 10M17 1c3 4 3 10 0 14" fill="none" stroke="#777"/></svg></span>
            <span class="t-item"><svg width="18" height="18" viewBox="0 0 18 18"><circle cx="9" cy="9" r="9" fill="#8c8c8c"/><path d="M5.500 5.500l7 7M12.500 5.500l-7 7" stroke="#111" stroke-width="2"/></svg></span>
            <span class="clock"><span>下午 05:56</span><span>2019/6/1</span></span>
            <span class="notify">
                <svg width="20" height="18" viewBox="0 0 20 18"><path d="M0 0h20v14H7l-3 4v-4H0z" fill="#fff"/><path d="M4 4h12M4 7h12M4 10h12" stroke="#333"/></svg>
                <b class="badge">2</b>
            </span>
            <i class="show-desktop"></i>
        </div>
    </div>

    <script src="gear.js"></script>
</body>
</html>
```

FILE: styles.css
```css
* {
    box-sizing: border-box;
}
html, body {
    margin: 0;
    height: 100%;
}
body {
    width: 1920px;
    height: 1080px;
    overflow: hidden;
    display: flex;
    flex-direction: column;
    background: #efefef;
    color: #111;
    font-family: "Noto Sans", "Noto Sans CJK TC", sans-serif;
    font-size: 15px;
}
i {
    display: block;
}
.defs {
    position: absolute;
    width: 0;
    height: 0;
}

/* title + menu */
.titlebar {
    height: 30px;
    flex: none;
    display: flex;
    align-items: center;
    background: #fff;
}
.logo {
    width: 21px;
    height: 21px;
    margin-left: 2px;
}
.title {
    margin-left: 4px;
    font-size: 15.500px;
}
.winctl {
    margin-left: auto;
    padding-right: 4px;
    display: flex;
}
.wbtn {
    width: 58px;
    height: 30px;
    display: flex;
    align-items: center;
    justify-content: center;
}
.menubar {
    height: 24px;
    flex: none;
    display: flex;
    align-items: center;
    padding-bottom: 2px;
    background: #fff;
    border-bottom: 1px solid #ececec;
    font-size: 14.500px;
    white-space: nowrap;
}
.menubar .m1 { margin-left: 8px; width: 65px; }
.menubar .m2 { width: 64px; }
.menubar .m3 { width: 65px; }
.menubar .m4 { width: 64px; }
.menubar .m5 { width: 47px; }
.menubar .m6 { width: 96px; }
.menubar .m7 { width: 72px; }

/* toolbars */
.toolbar {
    height: 40px;
    flex: none;
    display: flex;
    align-items: center;
    padding-top: 1px;
    background: #efefef;
    border-bottom: 2px solid #c6c6c6;
}
.grip {
    width: 3px;
    height: 28px;
    margin: 0 6px 0 3px;
    background: repeating-linear-gradient(#a8a8a8 0 2px, transparent 2px 4px);
}
.toolbar > .grip:first-child {
    margin-right: 5px;
}
.btn {
    width: 37px;
    height: 32px;
    flex: none;
    display: flex;
    justify-content: center;
}
.btn svg {
    width: 32px;
    height: 32px;
}
.dd {
    width: 14px;
    height: 32px;
    flex: none;
    display: flex;
    align-items: center;
    justify-content: center;
}
.dd::after {
    content: "";
    border-left: 4.500px solid transparent;
    border-right: 4.500px solid transparent;
    border-top: 5px solid #111;
}
.dd.off::after {
    border-top-color: #777;
}
.sep {
    width: 1px;
    height: 30px;
    margin: 0 3px;
    background: #cdcdcd;
}
.sep-wide {
    margin-left: 5px;
}
.sep-pattern {
    margin: 0 4px 0 5px;
}
.end {
    width: 1px;
    height: 38px;
    margin-left: 1px;
    background: #c6c6c6;
}
.end2 {
    margin-left: 2px;
}
.combo {
    width: 139px;
    height: 22px;
    display: flex;
    align-items: center;
    background: #e6e6e6;
    border: 1px solid #b9b9b9;
    font-family: "Liberation Serif", serif;
    font-size: 14.500px;
}
.combo-icon {
    width: 18px;
    height: 18px;
    margin: 0 3px 0 2px;
}
.combo-caret {
    margin-left: auto;
    margin-right: 6px;
    border-left: 4px solid transparent;
    border-right: 4px solid transparent;
    border-top: 5px solid #111;
}

/* main area */
.main {
    height: 821px;
    flex: none;
    display: flex;
}
.dock {
    width: 273px;
    flex: none;
    display: flex;
    flex-direction: column;
    padding: 1px 5px 0 0;
}
.dock-head {
    height: 22px;
    flex: none;
    display: flex;
    align-items: center;
    padding: 0 4px 2px;
    background: #d9d9d9;
    border: 1px solid #bdbdbd;
    font-size: 15px;
}
.dock-float {
    width: 10px;
    height: 10px;
    margin: 2px 0 0 auto;
}
.dock-close {
    width: 10px;
    height: 10px;
    margin: 2px 0 0 8px;
}
.dock-tabs {
    height: 25px;
    flex: none;
    display: flex;
    align-items: flex-end;
    padding-left: 1px;
}
.dtab {
    width: 56px;
    height: 22px;
    text-align: center;
    line-height: 20px;
    background: #efefef;
    border: 1px solid #dcdcdc;
    border-bottom: 0;
    font-size: 15px;
}
.dtab.on {
    width: 61px;
    height: 24px;
    line-height: 22px;
    padding-right: 3px;
    background: #fff;
}
.dock-page {
    width: 265px;
    flex: 1;
    display: flex;
    flex-direction: column;
    border: 1px solid #dcdcdc;
    border-top: 0;
    padding: 1px 0 0 2px;
}
.tree {
    height: 359px;
    flex: none;
    background: #fff;
    border: 1px solid #a0a0a0;
    font-size: 15px;
}
.tree-head {
    height: 28px;
    width: 152px;
    padding: 2px 0 0 5px;
    border-right: 1px solid #e4e4e4;
    font-size: 14.500px;
    line-height: 24px;
}
.row {
    height: 22px;
    display: flex;
    align-items: center;
    white-space: nowrap;
}
.group-label {
    padding: 0 0 2px 3px;
    font-size: 14.500px;
}
.d1 { padding-left: 5px; }
.d2 { padding-left: 30px; }
.d3 { padding-left: 55px; }
.dim { color: #9c9c9c; }
.chev {
    width: 12px;
    height: 12px;
    flex: none;
}
.node {
    height: 22px;
    margin-left: 8px;
    padding-left: 2px;
    display: flex;
    align-items: center;
    gap: 7px;
}
.ico {
    width: 20px;
    height: 20px;
    flex: none;
}
.sel {
    width: 103px;
    background: #e2e4fa;
}
.focus {
    width: 75px;
    border: 1px dotted #111;
    padding-left: 1px;
    margin-left: 8px;
    gap: 6px;
}
.props {
    height: 381px;
    flex: none;
    margin: 9px 3px 0 1px;
    background: #fff;
    border: 1px solid #a0a0a0;
}
.props-head {
    height: 29px;
    display: flex;
    align-items: center;
    font-size: 14px;
    border-bottom: 1px solid #f4f4f4;
}
.ph1 {
    width: 126px;
    padding-left: 6px;
    border-right: 1px solid #e4e4e4;
    line-height: 29px;
}
.ph2 {
    padding-left: 6px;
}
.page-tabs {
    position: relative;
    height: 22px;
    flex: none;
    font-size: 14px;
    background: #fff;
    margin: 0 0 0 -2px;
}
.tab-shape {
    position: absolute;
    left: 0;
    top: 0;
}
.ptab {
    position: absolute;
    top: 0;
    line-height: 20px;
}
.pt1 { left: 16px; }
.pt2 { left: 76px; }

/* 3d view */
.center {
    flex: 1;
    display: flex;
    flex-direction: column;
}
.viewport {
    position: relative;
    height: 794px;
    flex: none;
    overflow: hidden;
    background: linear-gradient(#333365, #9494ab);
    border-bottom: 1px solid #b0b0b8;
}
.gear {
    position: absolute;
    left: 523px;
    top: 96px;
}
.navcube {
    position: absolute;
    right: 0;
    top: 0;
}
.cube-label {
    font-family: "Liberation Serif", serif;
    font-size: 25px;
    fill: #000;
}
.cube-z {
    font-family: "Liberation Sans", sans-serif;
    font-size: 9px;
    fill: #2222aa;
}
.axes {
    position: absolute;
    right: 0;
    top: 725px;
}
.axis {
    font-family: "Liberation Sans", sans-serif;
    font-size: 9px;
    fill: #222;
}
.mdi-bar {
    flex: 1;
    background: #efefef;
}
.mdi-tab {
    width: 148px;
    height: 27px;
    display: flex;
    align-items: center;
    background: #fff;
    border: 1px solid #dcdcdc;
    border-top: 0;
    padding-left: 14px;
    font-family: "Liberation Serif", "Noto Sans CJK TC", serif;
    font-size: 15px;
}
.mdi-logo {
    width: 20px;
    height: 20px;
    margin-right: 3px;
}
.mdi-close {
    width: 14px;
    height: 14px;
    margin-left: 6px;
}

/* status bar */
.statusbar {
    height: 35px;
    flex: none;
    display: flex;
    align-items: center;
    background: #efefef;
    padding: 0 2px 0 6px;
    font-size: 15px;
}
.status-mouse {
    width: 13px;
    height: 18px;
    margin-left: auto;
}
.status-nav {
    margin-left: 6px;
    font-size: 14.500px;
}
.status-caret {
    margin-left: 5px;
    border-left: 4px solid transparent;
    border-right: 4px solid transparent;
    border-top: 4px solid #111;
}
.status-sep {
    width: 1px;
    height: 30px;
    margin: 0 5px 0 7px;
    background: #d4d4d4;
}

/* windows taskbar */
.taskbar {
    position: relative;
    height: 50px;
    flex: none;
    display: flex;
    align-items: center;
    background: linear-gradient(90deg, #292b2c 0, #1e2021 30%, #2b2c2e 52%, #0d1012 58%, #0b0c0e 100%);
    color: #fff;
}
.sys {
    width: 60px;
    height: 50px;
    flex: none;
    display: flex;
    align-items: center;
    justify-content: center;
}
.sysgap {
    margin-left: 3px;
}
.app {
    width: 62px;
    height: 50px;
    flex: none;
    display: flex;
    align-items: center;
    justify-content: center;
}
.active {
    background: #535557;
}
.under {
    position: absolute;
    bottom: 0;
    height: 3px;
    background: #76b9ed;
}
.u1 { left: 747px; width: 51px; }
.u2 { left: 809px; width: 51px; }
.u3 { left: 871px; width: 51px; }
.u4 { left: 927px; width: 62px; }
.line-text {
    font-family: "Liberation Sans", sans-serif;
    font-size: 8.500px;
    font-weight: bold;
    fill: #00b900;
}
.ppt-text {
    font-family: "Liberation Sans", sans-serif;
    font-size: 17px;
    font-weight: bold;
    fill: #fff;
}
.tray {
    width: 352px;
    margin-left: auto;
    height: 50px;
    display: flex;
    align-items: center;
}
.t-item {
    width: 30px;
    display: flex;
    justify-content: center;
}
.t-people {
    margin-right: 15px;
}
.clock {
    width: 90px;
    display: flex;
    flex-direction: column;
    align-items: center;
    gap: 2px;
    margin-top: -1px;
    font-size: 15px;
    line-height: 21px;
    white-space: nowrap;
}
.notify {
    position: relative;
    width: 52px;
    display: flex;
    justify-content: center;
    padding-right: 2px;
}
.badge {
    position: absolute;
    left: 30px;
    top: 8px;
    width: 20px;
    height: 20px;
    border-radius: 50%;
    background: #3a3a3a;
    border: 1px solid #888;
    font-size: 13px;
    font-weight: 400;
    line-height: 18px;
    text-align: center;
}
.show-desktop {
    width: 1px;
    height: 28px;
    margin: -22px 0 0 8px;
    background: #555;
}
```

FILE: gear.js
```js
// draw the ring gear outline from one tooth profile
var TEETH = 64;
var CX = 300, CY = 300;
var R_IN = 248.5, R_ROOT = 260.5, R_TIP = 281;

function pt(angle, t, r) {
    var x = CX + r * Math.sin(angle) + t * Math.cos(angle);
    var y = CY - r * Math.cos(angle) + t * Math.sin(angle);
    return x.toFixed(2) + ' ' + y.toFixed(2);
}

var d = '';
for (var i = 0; i < TEETH; i++) {
    var a = i * 2 * Math.PI / TEETH;
    d += (i === 0 ? 'M' : 'L') + pt(a, -9.5, R_ROOT);
    d += 'Q' + pt(a, -7.8, R_ROOT) + ' ' + pt(a, -7.5, R_ROOT + 4);
    d += 'L' + pt(a, -6.3, R_TIP - 2);
    d += 'Q' + pt(a, -6.1, R_TIP) + ' ' + pt(a, -4.3, R_TIP);
    d += 'L' + pt(a, 4.3, R_TIP);
    d += 'Q' + pt(a, 6.1, R_TIP) + ' ' + pt(a, 6.3, R_TIP - 2);
    d += 'L' + pt(a, 7.5, R_ROOT + 4);
    d += 'Q' + pt(a, 7.8, R_ROOT) + ' ' + pt(a, 9.5, R_ROOT);
}
d += 'Z';
// inner circle, cut out by the even-odd fill
d += 'M' + (CX - R_IN) + ' ' + CY + 'a' + R_IN + ' ' + R_IN + ' 0 1 0 ' + (2 * R_IN) + ' 0a' + R_IN + ' ' + R_IN + ' 0 1 0 ' + (-2 * R_IN) + ' 0Z';

document.getElementById('gearPath').setAttribute('d', d);
```
